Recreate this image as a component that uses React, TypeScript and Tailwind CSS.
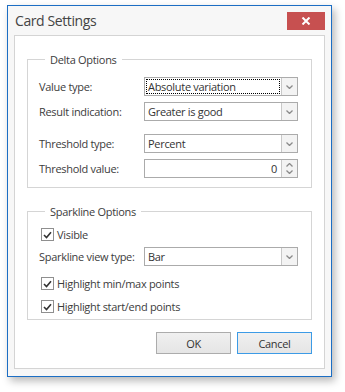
import React from 'react';

const font = { fontFamily: '"Open Sans", "Noto Sans", Arial, sans-serif' };

function Chevron({ up = false }: { up?: boolean }) {
  return (
    <svg width="7" height="4" viewBox="0 0 7 4" className={up ? 'rotate-180' : ''}>
      <path d="M0.5 0.5 L3.5 3.5 L6.5 0.5" fill="none" stroke="#8a8a8a" strokeWidth={1.3} />
    </svg>
  );
}

function Combo({ value, focused = false }: { value: string; focused?: boolean }) {
  return (
    <div className="flex h-[19px] w-[154px] border border-[#ababab] bg-white">
      <div className="flex flex-1 items-center p-px">
        <div
          className={`flex h-full w-full items-center pl-[1px] text-[#333] ${
            focused ? 'border border-dotted border-black' : 'border border-transparent'
          }`}
        >
          {value}
        </div>
      </div>
      <div className="flex w-[16px] items-center justify-center border-l border-[#c8c8c8] bg-[#f3f3f3]">
        <Chevron />
      </div>
    </div>
  );
}

function Spin({ value }: { value: string }) {
  return (
    <div className="flex h-[19px] w-[154px] border border-[#ababab] bg-white">
      <div className="flex flex-1 items-center justify-end pr-[4px] text-[#333]">{value}</div>
      <div className="flex w-[16px] flex-col items-center justify-center gap-[3px] border-l border-[#c8c8c8] bg-[#f3f3f3]">
        <Chevron up />
        <Chevron />
      </div>
    </div>
  );
}

function Check({ label }: { label: string }) {
  return (
    <div className="flex items-center">
      <div className="ml-[2px] flex h-[13px] w-[13px] items-center justify-center border border-[#8f8f8f] bg-white">
        <svg width="9" height="8" viewBox="0 0 9 8">
          <path d="M1 4 L3.5 6.5 L8 1.2" fill="none" stroke="#333" strokeWidth={1.6} />
        </svg>
      </div>
      <span className="ml-[3px] text-[#3c3c3c]">{label}</span>
    </div>
  );
}

function Row({ label, children }: { label: string; children: React.ReactNode }) {
  return (
    <div className="flex items-center">
      <span className="w-[105px] shrink-0 whitespace-nowrap text-[#3c3c3c]">{label}</span>
      {children}
    </div>
  );
}

export default function App() {
  return (
    <div
      className="h-[392px] w-[345px] bg-white pl-[7px] pt-[5px] text-[11px] leading-[15px] tracking-[-0.3px]"
      style={font}
    >
      <div className="flex h-[372px] w-[325px] flex-col border border-[#1c6ec4] bg-[#f7f7f7] shadow-[3px_4px_8px_rgba(0,0,0,0.28)]">
        {/* Title bar */}
        <div className="flex h-[29px] shrink-0 items-center justify-between pl-[7px] pr-[6px]">
          <span className="text-[14px] tracking-[-0.4px] text-[#444]">Card Settings</span>
          <button className="flex h-[18px] w-[38px] items-center justify-center bg-[#c75050]">
            <svg width="10" height="8" viewBox="0 0 10 8">
              <path d="M1.5 0.5 L8.5 7.5 M8.5 0.5 L1.5 7.5" stroke="white" strokeWidth={2} />
            </svg>
          </button>
        </div>

        <div className="mx-[6px] mb-[7px] flex flex-1 flex-col border border-[#d4d4d4] bg-white px-[12px] pt-[16px]">
          <fieldset className="border border-[#d5d5d5] px-[11px] pb-[9px]">
            <legend className="ml-[6px] px-[5px] text-[#3c3c3c]">Delta Options</legend>
            <div className="mt-[10px] flex flex-col">
              <Row label="Value type:">
                <Combo value="Absolute variation" focused />
              </Row>
              <div className="mt-[6px]">
                <Row label="Result indication:">
                  <Combo value="Greater is good" />
                </Row>
              </div>
              <div className="mt-[13px]">
                <Row label="Threshold type:">
                  <Combo value="Percent" />
                </Row>
              </div>
              <div className="mt-[6px]">
                <Row label="Threshold value:">
                  <Spin value="0" />
                </Row>
              </div>
            </div>
          </fieldset>

          <fieldset className="mt-[16px] border border-[#d5d5d5] px-[11px] pb-[5px]">
            <legend className="ml-[6px] px-[5px] text-[#3c3c3c]">Sparkline Options</legend>
            <div className="mt-[8px] flex flex-col">
              <Check label="Visible" />
              <div className="mt-[5px]">
                <Row label="Sparkline view type:">
                  <Combo value="Bar" />
                </Row>
              </div>
              <div className="mt-[10px]">
                <Check label="Highlight min/max points" />
              </div>
              <div className="mt-[8px]">
                <Check label="Highlight start/end points" />
              </div>
            </div>
          </fieldset>

          <div className="mt-[12px] flex justify-end gap-[6px]">
            <button className="h-[22px] w-[75px] border border-[#acacac] bg-gradient-to-b from-[#f0f0f0] to-[#e5e5e5] text-[#333]">
              OK
            </button>
            <button className="h-[22px] w-[75px] border border-[#3c9be6] bg-gradient-to-b from-[#f0f0f0] to-[#e5e5e5] text-[#333]">
              Cancel
            </button>
          </div>
        </div>
      </div>
    </div>
  );
}
